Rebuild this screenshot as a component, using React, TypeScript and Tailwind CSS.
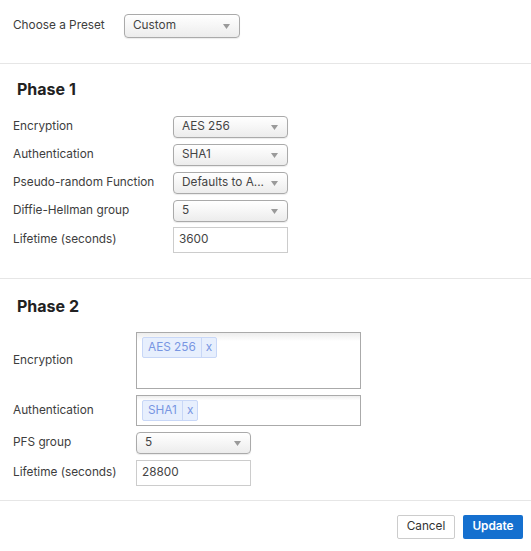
import React from 'react';

const Arrow = () => (
  <svg width="7" height="5" viewBox="0 0 7 5" className="shrink-0">
    <path d="M0 0 L7 0 L3.5 5 Z" fill="#9a9a9a" />
  </svg>
);

const Select: React.FC<{ value: string; className?: string }> = ({ value, className = '' }) => (
  <div
    className={`flex items-center justify-between pl-[8px] pr-[9px] border border-[#aaa] rounded-[4px] bg-gradient-to-b from-white via-[#f6f6f6] to-[#ececec] shadow-[0_1px_1px_rgba(0,0,0,0.08)] text-[#444] ${className}`}
  >
    <span className="truncate">{value}</span>
    <Arrow />
  </div>
);

const TextInput: React.FC<{ value: string; className?: string }> = ({ value, className = '' }) => (
  <div className={`flex items-center pl-[5px] border border-[#ccc] bg-white text-[#444] ${className}`}>{value}</div>
);

const Tag: React.FC<{ label: string }> = ({ label }) => (
  <div className="flex h-[21px] items-stretch rounded-[2px] border border-[#c8d7f7] bg-[#e7effd] text-[#7896e2]">
    <span className="flex items-center px-[5px]">{label}</span>
    <span className="flex items-center border-l border-[#c8d7f7] px-[4px]">x</span>
  </div>
);

const MultiBox: React.FC<{ tags: string[]; className?: string }> = ({ tags, className = '' }) => (
  <div
    className={`flex items-start gap-[4px] p-[4px] pl-[5px] border border-[#aaa] bg-gradient-to-b from-[#eee] from-[1%] to-white to-[15%] ${className}`}
  >
    {tags.map((t) => (
      <Tag key={t} label={t} />
    ))}
  </div>
);

const Row: React.FC<{ label: string; labelW: string; children: React.ReactNode }> = ({ label, labelW, children }) => (
  <div className="flex items-center">
    <div className={`${labelW} pl-[13px] shrink-0`}>{label}</div>
    {children}
  </div>
);

export default function App() {
  return (
    <div className="w-[531px] h-[551px] bg-white text-[11.8px] text-[#3d3d3d] font-['Inter',sans-serif] overflow-hidden">
      {/* preset */}
      <div className="h-[63px] pt-[14px]">
        <Row label="Choose a Preset" labelW="w-[124px]">
          <Select value="Custom" className="w-[116px] h-[24px]" />
        </Row>
      </div>
      <div className="h-px bg-[#e6e6e6]" />

      {/* phase 1 */}
      <div className="pt-[15px] pb-[25px]">
        <h2 className="h-[20px] leading-[20px] pl-[17px] text-[16px] font-bold text-[#222]">Phase 1</h2>
        <div className="mt-[17px] flex flex-col gap-[6px]">
          <Row label="Encryption" labelW="w-[173px]">
            <Select value="AES 256" className="w-[115px] h-[22px]" />
          </Row>
          <Row label="Authentication" labelW="w-[173px]">
            <Select value="SHA1" className="w-[115px] h-[22px]" />
          </Row>
          <Row label="Pseudo-random Function" labelW="w-[173px]">
            <Select value="Defaults to A..." className="w-[115px] h-[22px]" />
          </Row>
          <Row label="Diffie-Hellman group" labelW="w-[173px]">
            <Select value="5" className="w-[115px] h-[22px]" />
          </Row>
        </div>
        <div className="mt-[5px]">
          <Row label="Lifetime (seconds)" labelW="w-[173px]">
            <TextInput value="3600" className="w-[115px] h-[26px]" />
          </Row>
        </div>
      </div>
      <div className="h-px bg-[#e6e6e6]" />

      {/* phase 2 */}
      <div className="pt-[17px] pb-[14px]">
        <h2 className="h-[20px] leading-[20px] pl-[17px] text-[16px] font-bold text-[#222]">Phase 2</h2>
        <div className="mt-[16px] flex flex-col gap-[6px]">
          <Row label="Encryption" labelW="w-[136px]">
            <MultiBox tags={['AES 256']} className="w-[225px] h-[57px]" />
          </Row>
          <Row label="Authentication" labelW="w-[136px]">
            <MultiBox tags={['SHA1']} className="w-[225px] h-[31px]" />
          </Row>
          <Row label="PFS group" labelW="w-[136px]">
            <Select value="5" className="w-[115px] h-[22px]" />
          </Row>
          <Row label="Lifetime (seconds)" labelW="w-[136px]">
            <TextInput value="28800" className="w-[115px] h-[26px]" />
          </Row>
        </div>
      </div>
      <div className="h-px bg-[#e6e6e6]" />

      {/* footer */}
      <div className="flex justify-end gap-[8px] pt-[14px] pr-[8px]">
        <button className="h-[24px] w-[58px] rounded-[2px] border border-[#ccc] bg-white text-[#333]">Cancel</button>
        <button className="h-[24px] w-[60px] rounded-[2px] bg-[#1570cf] text-white font-semibold">Update</button>
      </div>
    </div>
  );
}
